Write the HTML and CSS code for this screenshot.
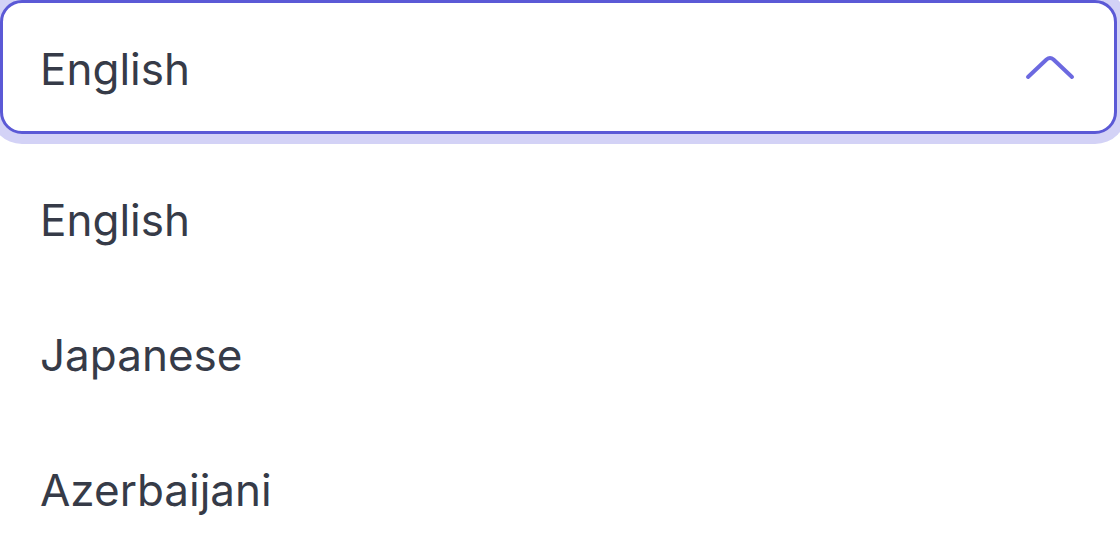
FILE: index.html
```html
<!DOCTYPE html>
<html lang="en">
<head>
<meta charset="utf-8">
<title>Language select</title>
<link rel="stylesheet" href="styles.css">
</head>
<body>
<div class="select">
  <button class="select-trigger" type="button">
    <span class="select-value">English</span>
    <svg class="chevron" width="52" height="28" viewBox="0 0 52 28" aria-hidden="true">
      <path d="M4 24 L22.5 6.5 Q26 3.5 29.5 6.5 L48 24" fill="none" stroke="#6c69e0" stroke-width="4" stroke-linecap="round" stroke-linejoin="round"/>
    </svg>
  </button>
  <ul class="select-list">
    <li class="select-option">English</li>
    <li class="select-option">Japanese</li>
    <li class="select-option">Azerbaijani</li>
  </ul>
</div>
</body>
</html>
```
FILE: styles.css
```css
html, body {
  margin: 0;
  padding: 0;
  background: #ffffff;
}
body {
  font-family: Inter, "Noto Sans", "Liberation Sans", sans-serif;
  color: #363b48;
  overflow: hidden;
}
.select {
  width: 1117px;
}
.select-trigger {
  box-sizing: border-box;
  width: 1117px;
  height: 134px;
  margin: 0;
  padding: 0 38px 0 37px;
  display: flex;
  align-items: center;
  justify-content: space-between;
  background: #ffffff;
  border: 3px solid #5b59d6;
  border-radius: 22px;
  box-shadow: 0 0 0 10px #d3d2f6;
  font: inherit;
  color: inherit;
  cursor: pointer;
}
.select-value {
  font-size: 44px;
  line-height: 1;
  padding-top: 4px;
}
.chevron {
  display: block;
}
.select-list {
  list-style: none;
  margin: 19px 0 0;
  padding: 0;
}
.select-option {
  height: 135px;
  line-height: 135px;
  font-size: 44px;
  padding-left: 40px;
}
```
